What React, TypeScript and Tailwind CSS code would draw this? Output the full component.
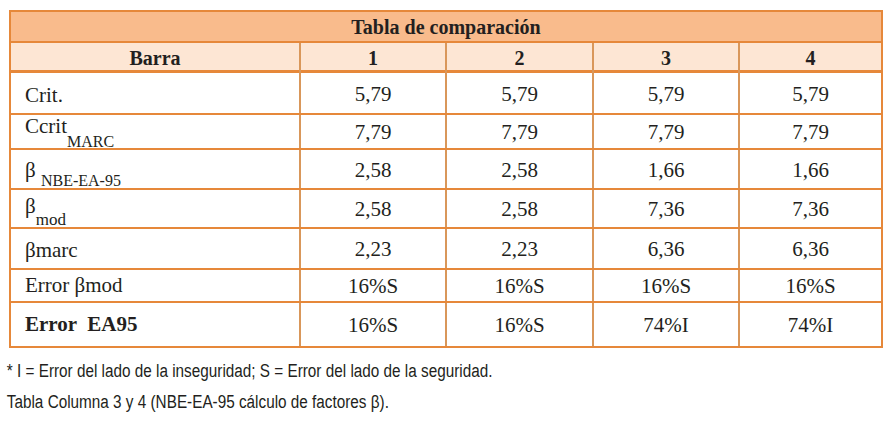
import React from 'react';

/** One data row of the comparison table. */
interface Row {
  label: React.ReactNode;
  values: string[];
  height: string;
  labelPad?: string;
  bold?: boolean;
}

const cols = 'grid grid-cols-[288px_146px_147px_146px_143px]';
const serif = { fontFamily: '"Liberation Serif", "Times New Roman", serif' };

const rows: Row[] = [
  { label: 'Crit.', values: ['5,79', '5,79', '5,79', '5,79'], height: 'h-[40px]', labelPad: 'pt-[4px]' },
  {
    label: (
      <>
        Ccrit<span className="text-[16px] relative top-[14px]">MARC</span>
      </>
    ),
    values: ['7,79', '7,79', '7,79', '7,79'],
    height: 'h-[33px]',
    labelPad: 'pb-[11px]',
  },
  {
    label: (
      <>
        β <span className="text-[16px] relative top-[9px]">NBE-EA-95</span>
      </>
    ),
    values: ['2,58', '2,58', '1,66', '1,66'],
    height: 'h-[38px]',
    labelPad: 'pt-[2px]',
  },
  {
    label: (
      <>
        β<span className="text-[17px] relative top-[12px]">mod</span>
      </>
    ),
    values: ['2,58', '2,58', '7,36', '7,36'],
    height: 'h-[37px]',
    labelPad: 'pb-[4px]',
  },
  { label: 'βmarc', values: ['2,23', '2,23', '6,36', '6,36'], height: 'h-[39px]', labelPad: 'pt-[4px]' },
  { label: 'Error βmod', values: ['16%S', '16%S', '16%S', '16%S'], height: 'h-[31px]' },
  {
    label: <span className="whitespace-pre">Error  EA95</span>,
    values: ['16%S', '16%S', '74%I', '74%I'],
    height: 'h-[43px]',
    bold: true,
  },
];

export default function App() {
  return (
    <div className="w-[896px] h-[422px] bg-white text-[#231f20] overflow-hidden">
      {/* Table */}
      <div className="ml-[9px] pt-[10px]">
        <div className="w-[874px] border-2 border-[#e6883a]" style={serif}>
          <div className="h-[31px] bg-[#f9bb8c] border-b-2 border-[#e6883a] flex items-center justify-center text-[20px] font-bold leading-none">
            Tabla de comparación
          </div>
          <div className={`${cols} h-[30px] bg-[#fde6d4] border-b-[3px] border-[#e6883a] text-[20px] font-bold`}>
            <div className="flex items-center justify-center">Barra</div>
            {['1', '2', '3', '4'].map((n) => (
              <div key={n} className="border-l-2 border-[#d9975a] flex items-center justify-center">
                {n}
              </div>
            ))}
          </div>
          {rows.map((r, i) => (
            <div
              key={i}
              className={`${cols} ${r.height} ${i < rows.length - 1 ? 'border-b-2 border-[#e6883a] box-content' : ''} text-[21px]`}
            >
              <div className={`flex items-center pl-[14px] leading-none ${r.labelPad ?? ''} ${r.bold ? 'font-bold' : ''}`}>
                <span>{r.label}</span>
              </div>
              {r.values.map((v, j) => (
                <div key={j} className="border-l-2 border-[#d9975a] flex items-center justify-center leading-none pt-[2px]">
                  {v}
                </div>
              ))}
            </div>
          ))}
        </div>
      </div>

      {/* Notes */}
      <div
        className="mt-[8px] pl-[8px] text-[18px] leading-[31px] text-[#231f20] origin-left scale-x-[0.85] w-[1000px]"
        style={{ fontFamily: '"Liberation Sans", Arial, sans-serif' }}
      >
        <p>* I = Error del lado de la inseguridad; S = Error del lado de la seguridad.</p>
        <p>Tabla Columna 3 y 4 (NBE-EA-95 cálculo de factores β).</p>
      </div>
    </div>
  );
}
